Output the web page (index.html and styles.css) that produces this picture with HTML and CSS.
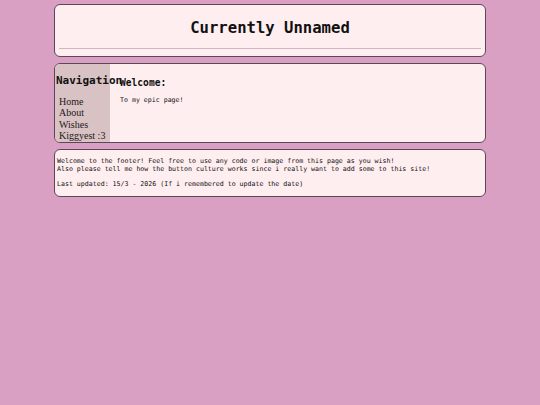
FILE: index.html
```
<!DOCTYPE html>
<html>
<head>
<meta charset="utf-8">
<title>Currently Unnamed</title>
<link rel="stylesheet" href="styles.css">
</head>
<body>
<div class="page">
  <header class="box header">
    <h1>Currently Unnamed</h1>
    <hr class="rule">
  </header>
  <div class="box main">
    <nav class="sidebar">
      <h2 class="nav-title">Navigation</h2>
      <ul class="nav-list">
        <li><a href="#">Home</a></li>
        <li><a href="#">About</a></li>
        <li><a href="#">Wishes</a></li>
        <li><a href="#">Kiggyest :3</a></li>
      </ul>
    </nav>
    <section class="content">
      <h3 class="welcome">Welcome:</h3>
      <p class="text">To my epic page!</p>
    </section>
  </div>
  <footer class="box footer">
    <p class="text">Welcome to the footer! Feel free to use any code or image from this page as you wish!<br>Also please tell me how the button culture works since i really want to add some to this site!</p>
    <p class="text updated">Last updated: 15/3 - 2026 (If i remembered to update the date)</p>
  </footer>
</div>
</body>
</html>
```
FILE: styles.css
```
html, body {
  margin: 0;
  padding: 0;
  background: #d9a0c4;
}
body {
  padding-top: 4px;
  font-family: "DejaVu Sans Mono", monospace;
  color: #111;
}
.page {
  width: 432px;
  margin: 0 auto;
  display: flex;
  flex-direction: column;
  gap: 6px;
}
.box {
  background: #ffeef0;
  border: 1px solid #5a4858;
  border-radius: 6px;
  box-sizing: border-box;
}
.header {
  height: 53px;
  padding: 0 4px;
  display: flex;
  flex-direction: column;
}
.header h1 {
  margin: 0;
  padding-top: 14px;
  font: bold 15.6px/18px "DejaVu Sans Mono", monospace;
  text-align: center;
}
.rule {
  border: 0;
  border-top: 1px solid #cbb8c2;
  margin: 11px 0 0 0;
  height: 0;
}
.main {
  height: 80px;
  display: flex;
}
.sidebar {
  width: 55px;
  flex: none;
  background: #d9c2c3;
  border-radius: 5px 0 0 5px;
  padding-top: 10px;
  box-sizing: border-box;
}
.nav-title {
  margin: 0 0 0 1px;
  font: bold 11px/14px "DejaVu Sans Mono", monospace;
  white-space: nowrap;
}
.nav-list {
  list-style: none;
  margin: 8px 0 0 0;
  padding: 0 0 0 4px;
  font: 10px/11.4px "Liberation Serif", serif;
  white-space: nowrap;
}
.nav-list a {
  color: #1a1a1a;
  text-decoration: none;
}
.content {
  padding: 13px 0 0 10px;
}
.welcome {
  margin: 0;
  font: bold 9.6px/12px "DejaVu Sans Mono", monospace;
}
.text {
  margin: 0;
  font: 6.6px/8px "DejaVu Sans Mono", monospace;
}
.content .text {
  margin-top: 7px;
}
.footer {
  padding: 7px 2px 8px 2px;
}
.footer .updated {
  margin-top: 7px;
}
```
